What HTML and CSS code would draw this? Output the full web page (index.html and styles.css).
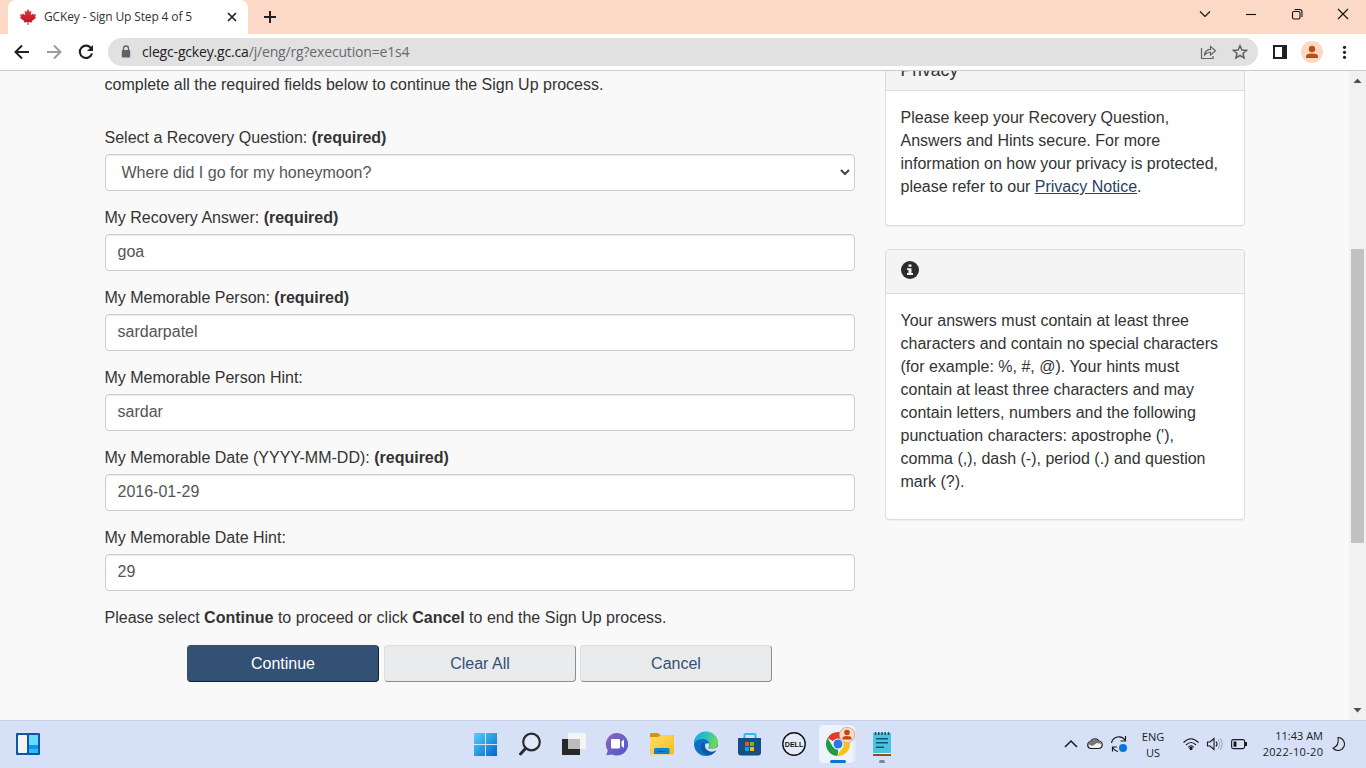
FILE: index.html
```html
<!DOCTYPE html>
<html lang="en">
<head>
<meta charset="utf-8">
<title>GCKey - Sign Up Step 4 of 5</title>
<link rel="stylesheet" href="styles.css">
</head>
<body>
<header class="tabstrip">
  <div class="tab">
    <svg class="leaf" width="16" height="16" viewBox="0 0 16 16"><defs><linearGradient id="leaf" x1="0" y1="0" x2="0" y2="1"><stop stop-color="#dc3a40"/><stop offset="1" stop-color="#b51020"/></linearGradient></defs><path d="M8 0 9.600 2.800 11.400 2 10.800 6 13 4.400 13.600 5.600 16 5.400 15.200 8 16 9 11.800 12 12 13.400 8.500 13 8.500 16H7.500V13L4 13.400 4.200 12 0 9 .8 8 0 5.400 2.400 5.600 3 4.400 5.200 6 4.600 2 6.400 2.800Z" fill="url(#leaf)"/></svg>
    <span class="tab-title">GCKey - Sign Up Step 4 of 5</span>
    <svg class="tab-close" width="10" height="10" viewBox="0 0 10 10"><path d="M1 1 9 9M9 1 1 9" stroke="#202124" stroke-width="1.7"/></svg>
  </div>
  <svg class="newtab" width="14" height="14" viewBox="0 0 14 14"><path d="M7 1V13M1 7H13" stroke="#202124" stroke-width="2"/></svg>
  <svg class="winctl" width="160" height="34" viewBox="1194 0 160 34" fill="none" stroke="#111" stroke-width="1.1">
    <path d="M1200 11.500 1205 16.500 1210 11.500"/><path d="M1246 14.500H1256"/>
    <rect x="1292.500" y="11.500" width="7.500" height="7.500" rx="1.500"/><path d="M1294.500 9.500H1299.500Q1302 9.500 1302 12V17"/>
    <path d="M1338 9 1348 19M1348 9 1338 19"/>
  </svg>
</header>
<nav class="toolbar">
  <svg width="108" height="36" viewBox="0 34 108 36" fill="none" stroke-width="2">
    <path d="M29 52H16M22 45.500 15.500 52 22 58.500" stroke="#202124"/>
    <path d="M47 52H60M54 45.500 60.500 52 54 58.500" stroke="#9c9c9e"/>
    <path d="M91.300 48.500A6.200 6.200 0 1 0 92 53.500" stroke="#202124" stroke-width="2.100"/><path d="M93 45V51H87Z" fill="#202124"/>
  </svg>
  <div class="omnibox">
    <svg width="10" height="14" viewBox="0 0 10 14"><path d="M2.500 6V3.500A2.500 2.500 0 0 1 7.500 3.500V6" fill="none" stroke="#5f6368" stroke-width="1.300"/><rect x=".8" y="5" width="8.400" height="7.500" rx="1" fill="#5f6368"/></svg>
    <span class="url"><b>clegc-gckey.gc.ca</b>/j/eng/rg?execution=e1s4</span>
    <svg class="omni-actions" width="52" height="20" viewBox="1199 42 52 20" fill="none" stroke="#5f6368" stroke-width="1.200">
      <path d="M1201.500 48V58.500H1213V56M1204.500 55Q1205 49.500 1210.500 49.300V46.500L1215.500 50.800 1210.500 55V52.300Q1207 52 1204.500 55Z"/>
      <path d="M1240 45.700 1241.900 50 1246.500 50.400 1243 53.400 1244.100 58 1240 55.500 1235.900 58 1237 53.400 1233.500 50.400 1238.100 50Z" stroke-width="1.500"/>
    </svg>
  </div>
  <svg width="108" height="36" viewBox="1258 34 108 36">
    <path d="M1273 45H1287V59H1273ZM1275 47V57H1282V47Z" fill="#202124" fill-rule="evenodd"/>
    <circle cx="1312" cy="52" r="11" fill="#fcd9c6"/><circle cx="1312" cy="49" r="3.200" fill="#c14b0c"/><path d="M1306 58V56.500Q1306 53.500 1312 53.500T1318 56.500V58Z" fill="#c14b0c"/>
    <g fill="#202124"><circle cx="1344.500" cy="47.300" r="1.600"/><circle cx="1344.500" cy="52.300" r="1.600"/><circle cx="1344.500" cy="57.300" r="1.600"/></g>
  </svg>
</nav>
<div class="viewport">
  <main class="form">
    <p class="intro">complete all the required fields below to continue the Sign Up process.</p>
    <div class="field"><label>Select a Recovery Question: <strong>(required)</strong></label>
      <div class="control select"><span>Where did I go for my honeymoon?</span><svg width="10" height="7" viewBox="0 0 10 7"><path d="M1 1 5 5 9 1" fill="none" stroke="#444" stroke-width="2"/></svg></div></div>
    <div class="field"><label>My Recovery Answer: <strong>(required)</strong></label><div class="control">goa</div></div>
    <div class="field"><label>My Memorable Person: <strong>(required)</strong></label><div class="control">sardarpatel</div></div>
    <div class="field"><label>My Memorable Person Hint:</label><div class="control">sardar</div></div>
    <div class="field"><label>My Memorable Date (YYYY-MM-DD): <strong>(required)</strong></label><div class="control">2016-01-29</div></div>
    <div class="field"><label>My Memorable Date Hint:</label><div class="control">29</div></div>
    <p class="note">Please select <strong>Continue</strong> to proceed or click <strong>Cancel</strong> to end the Sign Up process.</p>
    <div class="buttons"><button class="btn primary">Continue</button><button class="btn clear">Clear All</button><button class="btn">Cancel</button></div>
  </main>
  <aside class="side">
    <section class="panel first"><h2 class="panel-head">Privacy</h2>
      <p class="panel-body">Please keep your Recovery Question,<br>Answers and Hints secure. For more<br>information on how your privacy is protected,<br>please refer to our <a class="link">Privacy Notice</a>.</p></section>
    <section class="panel second"><h2 class="panel-head"><svg width="18" height="18" viewBox="0 0 18 18"><circle cx="9" cy="9" r="9" fill="#2c2c2c"/><path d="M7.500 3.500H10.500V5.800H7.500ZM6 7.200H10.500V12H12V14H6V12H7.500V9.100H6Z" fill="#f4f4f4"/></svg></h2>
      <p class="panel-body">Your answers must contain at least three<br>characters and contain no special characters<br>(for example: %, #, @). Your hints must<br>contain at least three characters and may<br>contain letters, numbers and the following<br>punctuation characters: apostrophe ('),<br>comma (,), dash (-), period (.) and question<br>mark (?).</p></section>
  </aside>
  <div class="scrollbar">
    <svg width="9" height="5" viewBox="0 0 9 5"><path d="M.5 5 4.500 .5 8.500 5Z" fill="#505050"/></svg>
    <div class="thumb"></div>
    <svg class="down" width="9" height="5" viewBox="0 0 9 5"><path d="M.5 0 4.500 4.500 8.500 0Z" fill="#505050"/></svg>
  </div>
</div>
<footer class="taskbar">
  <svg class="widgets" width="24" height="22" viewBox="0 0 24 22"><rect width="24" height="22" rx="1" fill="#0b59a4"/><rect x="2" y="2" width="9" height="18" rx="1" fill="#f3f3f1"/><path d="M13 2H22V12H13Z" fill="#68dcff"/><path d="M13 12H22V16H13Z" fill="#0797ef"/><path d="M13 16H22V20H13Z" fill="#36b5fb"/></svg>
  <div class="apps">
    <svg viewBox="0 0 44 48"><defs><linearGradient id="win" gradientUnits="userSpaceOnUse" x1="10" y1="13" x2="33" y2="36"><stop stop-color="#52d2fa"/><stop offset="1" stop-color="#0068c7"/></linearGradient></defs><path d="M10 13H21V24H10ZM22 13H33V24H22ZM10 25H21V36H10ZM22 25H33V36H22Z" fill="url(#win)"/></svg>
    <svg viewBox="0 0 44 48"><circle cx="23.500" cy="22" r="8.300" fill="#e0e9f8" stroke="#2c2c2e" stroke-width="2.200"/><path d="M17.500 28.500 12.500 34" stroke="#2c2c2e" stroke-width="3" stroke-linecap="round"/></svg>
    <svg viewBox="0 0 44 48"><rect x="10" y="19" width="18" height="16" fill="#282828"/><rect x="16" y="13" width="18" height="16" rx="1" fill="#f5f5f5"/><path d="M16 19H28V29H16Z" fill="#bcbcbc"/></svg>
    <svg viewBox="0 0 44 48"><defs><linearGradient id="chat" x1="0" y1="0" x2="1" y2="1"><stop stop-color="#9166b6"/><stop offset="1" stop-color="#4c56d1"/></linearGradient></defs><path d="M21.500 13A11.300 11.300 0 1 1 16 34.500L10.300 35.300 11.800 30.500A11.300 11.300 0 0 1 21.500 13Z" fill="url(#chat)"/><rect x="15" y="19" width="9" height="9.500" rx="1" fill="#fff"/><path d="M25.500 21.500 28 19.500V28L25.500 26Z" fill="#fff"/></svg>
    <svg viewBox="0 0 44 48"><defs><linearGradient id="fold" x1="0" y1="0" x2="1" y2="1"><stop stop-color="#ffdf71"/><stop offset="1" stop-color="#fbb916"/></linearGradient></defs><path d="M10 14Q10 13 11 13H18L20.500 15H33Q34 15 34 16V20H10Z" fill="#d99400"/><path d="M10 17H18L21 15H33Q34 15 34 16V33Q34 34.500 32.500 34.500H10Z" fill="url(#fold)"/><path d="M14 34V29.500Q14 28 15.500 28H28Q29.500 28 29.500 29.500V34Z" fill="#0d83d7"/><path d="M17.500 31.500H26" stroke="#075ba7"/></svg>
    <svg viewBox="0 0 44 48"><defs><linearGradient id="edge" x1="0" y1="0" x2="1" y2=".3"><stop stop-color="#17a6e4"/><stop offset=".55" stop-color="#2fc3bc"/><stop offset="1" stop-color="#6bd957"/></linearGradient></defs><circle cx="22" cy="24" r="12" fill="#0d6fc4"/><path d="M10 24A12 12 0 0 1 34 23Q34 28 28 29 24.500 29 24 27.500 26 26 25.500 23.500 24 19 19 19 12 19 10 24Z" fill="url(#edge)"/><path d="M19 22Q16 25 17.500 29.500 20 36 27 34.800A12 12 0 0 0 32.300 30.500Q27 33 23 30 20 27.500 20.500 24.500Z" fill="#1357a4"/><path d="M21 25Q21.500 22.500 25 23.500 26 26 24 27.500 24.500 29 28 29 31.500 29 34.500 26L34.500 30.500H32.300Q27 33 23 30 20.700 28 21 25Z" fill="#d6e1f7"/></svg>
    <svg viewBox="0 0 44 48"><path d="M16.500 19V15Q16.500 14 17.500 14H26.500Q27.500 14 27.500 15V19" fill="none" stroke="#30bdec" stroke-width="2"/><path d="M10 18H33V32.500Q33 35.500 30 35.500H13Q10 35.500 10 32.500Z" fill="#164e85"/><path d="M17 22H21V26H17Z" fill="#f25022"/><path d="M22 22H26V26H22Z" fill="#7fba00"/><path d="M17 27H21V31H17Z" fill="#00a4ef"/><path d="M22 27H26V31H22Z" fill="#ffb900"/></svg>
    <svg viewBox="0 0 44 48"><circle cx="22" cy="24" r="11.200" fill="#e4ebf7" stroke="#111" stroke-width="1.400"/><text class="dell" x="12.800" y="27" textLength="18.400" lengthAdjust="spacingAndGlyphs">DELL</text></svg>
    <svg viewBox="0 0 44 48"><rect x="5" y="5" width="36" height="38" rx="4" fill="#dfe8f8" stroke="#c9d5ea" stroke-width=".6"/><rect x="3" y="5" width="34.500" height="38" rx="4" fill="#edf2fb"/><path d="M22 24 11.600 18A12 12 0 0 1 32.400 18Z" fill="#e33b2e"/><path d="M22 24V36A12 12 0 0 1 11.600 18L17 27Z" fill="#239a48"/><path d="M22 24H34A12 12 0 0 1 20.500 36L27 27 27 19H32.500A12 12 0 0 1 34 24Z" fill="#fbc116"/><circle cx="22" cy="24" r="5.600" fill="#fff"/><circle cx="22" cy="24" r="4.500" fill="#2778e5"/><circle cx="31" cy="15" r="7.700" fill="#fcd9c6" stroke="#a9958d" stroke-width=".6"/><circle cx="31" cy="12.500" r="2.800" fill="#c14b0c"/><path d="M26.500 19.500V18Q26.500 16 31 16T35.500 18V19.500Z" fill="#c14b0c"/><rect x="14" y="40" width="16" height="3" rx="1.500" fill="#0877ce"/></svg>
    <svg viewBox="0 0 44 48"><path d="M13 13H31V33H13Z" fill="#4ac3de"/><path d="M13 33H31V34.500H13Z" fill="#fff"/><path d="M13 34H31V36H13Z" fill="#9c4b09"/><path d="M15.500 12V15M18.800 12V15M22 12V15M25.200 12V15M28.500 12V15M16 18.800H28M16 22.800H28M16 27.200H24" stroke="#0c566c" stroke-width="1.500"/><rect x="19" y="40" width="6" height="3" rx="1.500" fill="#7e8695"/></svg>
  </div>
  <svg class="tray" width="80" height="48" viewBox="1056 720 80 48" fill="none" stroke="#1b1b1b" stroke-width="1.200">
    <path d="M1065 747 1071 741 1077 747" stroke-width="1.500"/>
    <path d="M1090.500 748.500A3.600 3.600 0 0 1 1090.500 741.500 5 5 0 0 1 1099 741 3.800 3.800 0 0 1 1099 748.500Z" fill="#f0f0f0"/><path d="M1088 744Q1089 741 1091 741 1094 736 1099 741L1102 744 1097 743 1092 746Z" fill="#777" stroke="none"/>
    <path d="M1111.500 743A7.500 7.500 0 0 1 1125 740M1125.500 736V741H1120.500M1117 747H1112.500V751.500M1112.500 747.500Q1115 751 1118 751.500"/><circle cx="1123" cy="748" r="4" fill="#0878d4" stroke="none"/>
  </svg>
  <div class="lang">ENG<br>US</div>
  <svg class="status" width="70" height="48" viewBox="1180 720 70 48" fill="none" stroke="#1b1b1b" stroke-width="1.100">
    <path d="M1183.500 742.500Q1191 735 1198.500 742.500M1186 745Q1191 740 1196 745M1188.300 747.300Q1191 744.500 1193.700 747.300"/><circle cx="1191" cy="748.500" r="1.100" fill="#1b1b1b"/>
    <path d="M1207.500 742H1210L1214 738.500V749.500L1210 746H1207.500Z"/><path d="M1216 741.500Q1218 744 1216 746.500"/><path d="M1218 739.500Q1221.500 744 1218 748.500M1220 738Q1224.500 744 1220 750" stroke="#a2abbb"/>
    <rect x="1231.600" y="739.600" width="13" height="9" rx="1.800"/><path d="M1233.500 741.500H1236.500V746.700H1233.500Z" fill="#1b1b1b" stroke="none"/><path d="M1246 742V746" stroke-width="2"/>
  </svg>
  <div class="clock"><span class="time">11:43 AM</span><br><span class="date">2022-10-20</span></div>
  <svg class="moon" width="16" height="16" viewBox="0 0 16 16"><path d="M7 1.500A6.500 6.500 0 1 1 2 12.200Q8.500 9.500 7 1.500Z" fill="none" stroke="#1b1b1b" stroke-width="1.100"/></svg>
</footer>
</body>
</html>
```
FILE: styles.css
```css
* { box-sizing: border-box; }
body { margin: 0; width: 1366px; height: 768px; overflow: hidden; display: flex; flex-direction: column; font-family: "Liberation Sans", Arial, sans-serif; font-size: 16px; line-height: 23px; color: #333; background: #f9f9f9; }
svg { display: block; flex: none; }
p, h2 { margin: 0; font-size: 16px; font-weight: 400; }
.tabstrip { height: 34px; flex: none; background: #fcd9c6; display: flex; }
.tab { margin-left: 8px; width: 240px; background: #fff; border-radius: 8px 8px 0 0; display: flex; align-items: center; padding: 0 11px 0 12px; }
.tab-title { margin-left: 8px; font: 12px/16px "Open Sans", sans-serif; color: #333; white-space: nowrap; letter-spacing: -0.13px; }
.tab-close { margin-left: auto; }
.newtab { margin: 10px 0 0 15px; }
.winctl { margin-left: auto; margin-right: 12px; }
.toolbar { height: 37px; flex: none; background: #fff; border-bottom: 1px solid #cacaca; display: flex; align-items: center; }
.omnibox { width: 1150px; height: 28px; border-radius: 14px; background: #e1e1e1; display: flex; align-items: center; padding: 0 7px 0 13px; }
.url { margin-left: 11px; font: 14px/20px "Open Sans", sans-serif; color: #66696d; letter-spacing: -0.17px; white-space: nowrap; }
.url b { font-weight: 400; color: #202124; }
.omni-actions { margin-left: auto; }
.viewport { height: 649px; flex: none; display: flex; overflow: hidden; background: #f9f9f9; }
.form { width: 750px; margin-left: 104.5px; padding-top: 2px; }
.intro { margin-bottom: 30px; }
.field { height: 80px; }
.field label { display: block; margin-bottom: 5px; }
strong { font-weight: 700; }
.control { height: 37px; border: 1px solid #ccc; border-radius: 4px; background: #fff; box-shadow: inset 0 1px 1px rgba(0,0,0,.075); color: #555; padding: 5px 12px; line-height: 23px; }
.select { display: flex; align-items: center; justify-content: space-between; padding: 0 4px 0 16px; }
.note { margin-bottom: 16px; }
.buttons { display: flex; padding-left: 82.500px; }
.btn { width: 192px; height: 37px; margin-right: 4px; padding: 0; border: 1px solid; border-color: #dcdee1 #8b8d91 #8b8d91 #dcdee1; border-radius: 4px; background: #eaebed; color: #335075; font: 16px/23px "Liberation Sans", Arial, sans-serif; }
.btn.primary { margin-right: 5px; background: #335075; border-color: #335075 #11202f #11202f #335075; color: #fff; }
.side { width: 360px; margin-left: 30px; }
.panel { border: 1px solid #ddd; border-radius: 4px; background: #fff; box-shadow: 0 1px 1px rgba(0,0,0,.05); overflow: hidden; }
.panel-head { height: 44px; background: #f4f4f4; border-bottom: 1px solid #ddd; padding: 11px 15px; }
.panel-body { padding: 15px 0 0 15px; white-space: nowrap; }
.first { height: 182px; margin-top: -27px; margin-bottom: 23px; }
.first .panel-head { height: 46px; padding-top: 14px; font-size: 17.600px; }
.second { height: 271px; }
.link { color: #284162; text-decoration: underline; }
.scrollbar { width: 17px; margin-left: auto; background: #f1f1f1; display: flex; flex-direction: column; align-items: center; padding: 7px 0; }
.thumb { width: 13px; height: 294px; margin-top: 166px; background: #c1c1c1; }
.down { margin-top: auto; }
.taskbar { height: 48px; flex: none; background: #d6e1f7; border-top: 1px solid #c4d1e5; display: flex; align-items: flex-start; color: #1b1b1b; font: 11px/16px "Open Sans", sans-serif; }
.widgets { margin: 12px 0 0 16px; }
.apps { display: flex; margin: -1px 0 0 424px; }
.apps svg { width: 44px; height: 48px; }
.dell { font: 700 8px "Liberation Sans", Arial, sans-serif; fill: #111; }
.tray { margin: -1px 0 0 152px; }
.lang { width: 34px; text-align: center; margin-top: 8px; }
.status { margin: -1px 0 0 10px; }
.clock { width: 73px; margin-top: 7px; text-align: right; white-space: nowrap; }
.time { letter-spacing: 0; }
.date { letter-spacing: 0.33px; margin-right: -0.33px; }
.moon { margin: 15px 0 0 8px; }
```
